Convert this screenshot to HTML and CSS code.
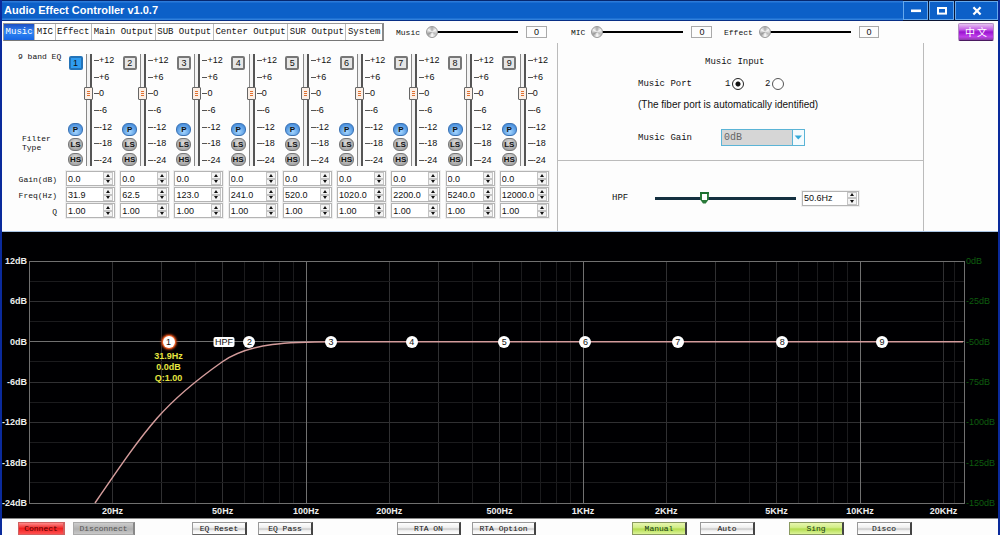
FILE: index.html
```html
<!DOCTYPE html>
<html lang="en">
<head>
<meta charset="utf-8">
<title>Audio Effect Controller v1.0.7</title>
<link rel="stylesheet" href="styles.css">
</head>
<body>
<div class="window">
  <header class="titlebar">
    <h1 class="title">Audio Effect Controller v1.0.7</h1>
    <div class="window-buttons">
      <button class="win-btn" aria-label="Minimize"><svg width="12" height="10" viewBox="0 0 12 10"><path d="M1 4.8h10" stroke="#fff" stroke-width="2.6"/></svg></button>
      <button class="win-btn" aria-label="Maximize"><svg width="12" height="10" viewBox="0 0 12 10"><rect x="2" y="2" width="8" height="5.6" fill="none" stroke="#fff" stroke-width="2"/></svg></button>
      <button class="win-btn win-close" aria-label="Close"><svg width="12" height="10" viewBox="0 0 12 10"><path d="M2.4 1.2l7.2 7.4M9.6 1.2L2.4 8.6" stroke="#fff" stroke-width="2.2"/></svg></button>
    </div>
  </header>

  <div class="toolbar">
    <nav class="tabs">
      <button class="tab tab-active">Music</button>
      <button class="tab">MIC</button>
      <button class="tab">Effect</button>
      <button class="tab">Main Output</button>
      <button class="tab">SUB Output</button>
      <button class="tab">Center Output</button>
      <button class="tab">SUR Output</button>
      <button class="tab">System</button>
    </nav>
    <div class="volumes">
      <div class="volume"><label for="vol-music">Music</label><input id="vol-music" class="ball" type="range" min="0" max="100" value="0"><output class="volume-value">0</output></div>
      <div class="volume"><label for="vol-mic">MIC</label><input id="vol-mic" class="ball" type="range" min="0" max="100" value="0"><output class="volume-value">0</output></div>
      <div class="volume"><label for="vol-effect">Effect</label><input id="vol-effect" class="ball" type="range" min="0" max="100" value="0"><output class="volume-value">0</output></div>
    </div>
    <button class="language" lang="zh">中 文</button>
  </div>

  <main class="panels">
    <section class="eq">
      <div class="eq-labels">
        <span class="eq-name">9 band EQ</span>
        <span class="filter-name">Filter<br>Type</span>
        <div class="row-names"><span>Gain(dB)</span><span>Freq(Hz)</span><span>Q</span></div>
      </div>
      <div class="bands" id="bands"></div>
    </section>

    <div class="settings">
      <section class="music-input">
        <h2 class="panel-title">Music Input</h2>
        <div class="field-row">
          <span class="field-name">Music Port</span>
          <label class="port">1<input type="radio" name="port" checked></label>
          <label class="port">2<input type="radio" name="port"></label>
        </div>
        <p class="note">(The fiber port is automatically identified)</p>
        <div class="field-row gain-row">
          <label class="field-name" for="music-gain">Music Gain</label>
          <span class="combo">
            <select id="music-gain" disabled><option>0dB</option></select>
            <svg class="combo-arrow" viewBox="0 0 12 15"><rect width="12" height="15" fill="#f4fbfe"/><path d="M0.5 0v15" stroke="#5bb4d6"/><path d="M2.6 5.4h7.4L6.3 9.6z" fill="#35a9d8"/></svg>
          </span>
        </div>
      </section>
      <section class="hpf">
        <label class="hpf-name" for="hpf">HPF</label>
        <input id="hpf" class="shield" type="range" min="0" max="100" value="34">
        <div class="spin hpf-spin"><input aria-label="HPF frequency" value="50.6Hz"><span class="steps"><button aria-label="Up"></button><button aria-label="Down"></button></span></div>
      </section>
    </div>
  </main>

  <section class="chart">
    <div class="axis-left" id="axis-left"></div>
    <div class="plot" id="plot">
      <svg class="plot-lines" id="plot-lines" viewBox="0 0 935 242" preserveAspectRatio="none"></svg>
    </div>
    <div class="axis-right" id="axis-right"></div>
    <div class="axis-bottom" id="axis-bottom"></div>
  </section>

  <footer class="actions">
    <div class="group"><button class="action narrow red">Connect</button><button class="action wide off">Disconnect</button></div>
    <div class="group group-mid"><button class="action">EQ Reset</button><button class="action">EQ Pass</button></div>
    <div class="group group-mid"><button class="action wide">RTA ON</button><button class="action wide">RTA Option</button></div>
    <div class="group group-last"><button class="action green">Manual</button><button class="action">Auto</button></div>
    <div class="group group-last"><button class="action green">Sing</button><button class="action">Disco</button></div>
  </footer>
</div>
<script src="app.js"></script>
</body>
</html>
```

FILE: styles.css
```css
* { box-sizing: border-box; }
body { margin: 0; font-family: "Liberation Mono", monospace; font-size: 9px; color: #111; background: #fdfdfd; }
button, input, select { font: inherit; color: inherit; margin: 0; padding: 0; }
h1, h2, p { margin: 0; }

.window { min-height: 100vh; display: flex; flex-direction: column; border: solid #0a2a9c; border-width: 0 2px; background: #fdfdfd; overflow: hidden; }

.titlebar { height: 21px; display: flex; justify-content: space-between; background: linear-gradient(#06286f 0 1px, #2b7ad9 1px 2px, #0c60c8 3px 18px, #2f80dc 19px 20px, #082f86 20px); }
.title { padding-left: 2px; font: bold 11px/20px "Liberation Sans", sans-serif; color: #fff; }
.window-buttons { display: flex; gap: 1px; padding: 1px 0; background: #0a1433; }
.win-btn { width: 25px; display: grid; place-items: center; border: 1px solid #66a8ec; background: #0c60c8; }
.win-close { width: 43px; }

.toolbar { display: flex; align-items: center; height: 22px; padding: 1px 4px 1px 1px; }
.tabs { display: flex; width: 381px; height: 18px; border: 1px solid #999; border-right: 2px solid #888; border-bottom: 1px solid #777; background: #fff; }
.tab { flex: auto; border: 0; border-left: 1px solid #bbb; background: none; white-space: nowrap; }
.tab:first-child { border-left: 0; }
.tab-active { background: linear-gradient(#1d4fc4, #2f86f4 50%, #1766e4); color: #fff; }
.volumes { flex: 1; display: grid; grid-template-columns: 175px 153px 155px; padding-left: 12px; font-size: 8px; }
.volume { display: flex; align-items: center; }
.volume label { margin-right: 6px; }
.volume-value { width: 21px; height: 12px; margin-left: 8px; border: 1px solid #aaa; text-align: center; font: 9px/10px "Liberation Sans", sans-serif; }
.language { width: 36px; height: 18px; border: 1px solid #b48fc4; border-bottom-color: #4a1a60; border-radius: 2px; background: linear-gradient(#e6c2f2, #c45ce6 35%, #9a14d0 50%, #c040ea 80%, #8a3aa8); color: #fff; font: 10px/14px "Noto Sans CJK SC", sans-serif; }

input[type="range"] { -webkit-appearance: none; appearance: none; background: none; }
.ball { width: 92px; height: 12px; }
.ball::-webkit-slider-runnable-track { height: 12px; background: linear-gradient(#000, #000) 6px 5px / 100% 2px no-repeat; }
.ball::-webkit-slider-thumb { -webkit-appearance: none; width: 12px; height: 12px; border: 1px solid #999; border-radius: 50%; background: conic-gradient(#aaa, #f4f4f4, #bbb, #fff, #999, #f6f6f6, #aaa); }

.panels { display: flex; height: 189px; border-bottom: 1px solid #a9c4e4; }
.eq { display: flex; width: 556px; border-right: 1px solid #bbb; padding-right: 3px; }
.eq-labels { width: 64px; display: flex; flex-direction: column; padding: 9px 9px 0 16px; font-size: 8px; line-height: 10px; white-space: nowrap; }
.filter-name { margin: 72px 0 0 4px; line-height: 9px; }
.row-names { display: grid; grid-auto-rows: 16px; margin-top: 20px; line-height: 16px; justify-items: end; }
.bands { flex: 1; display: grid; grid-template-columns: repeat(9, 1fr); padding-top: 11px; font-family: "Liberation Sans", sans-serif; }
.band { display: flex; flex-direction: column; gap: 5px; }
.strip { display: flex; height: 112px; padding-left: 1px; }
.strip-buttons { width: 17px; display: flex; flex-direction: column; align-items: center; gap: 2px; padding-top: 2px; }
.band-no { width: 14px; height: 14px; margin-bottom: auto; border: 2px solid #777; border-radius: 2px; background: #e6e6e6; font-size: 9px; line-height: 10px; }
.band-no.on { background: #2f9cf0; border-color: #2373b8; }
.filter { width: 15px; height: 13px; border: 1px solid #777; border-radius: 6px; background: radial-gradient(circle at 50% 35%, #ddd, #a2a2a2 75%); font-weight: bold; font-size: 8px; line-height: 10px; text-align: center; }
.filter.on { border-color: #3a72b4; background: radial-gradient(circle at 50% 70%, #a8d8ff, #4a90dd 75%); }
.fader { writing-mode: vertical-lr; direction: rtl; width: 10px; height: 112px; }
.fader::-webkit-slider-runnable-track { width: 10px; height: 112px; background: linear-gradient(90deg, transparent 2px, #888 2px 3px, #f4f4f4 3px 6px, #555 6px 8px, transparent 8px); }
.fader::-webkit-slider-thumb { -webkit-appearance: none; width: 9px; height: 13px; border: 1px solid #666; border-radius: 1px; background: linear-gradient(#e07030, #e07030) 2px 3px / 3px 1px no-repeat, linear-gradient(#e07030, #e07030) 2px 5px / 3px 1px no-repeat, linear-gradient(#e07030, #e07030) 2px 7px / 3px 1px no-repeat, #fbefe6; }
.scale { display: flex; flex-direction: column; justify-content: space-between; padding: 1px 0 0; line-height: 11px; white-space: nowrap; }
.scale span { display: flex; align-items: center; }
.scale span::before { content: ""; width: 5px; height: 1px; background: #555; }
.spins { display: grid; gap: 1px; }
.spin { display: flex; width: 49px; height: 15px; border: 1px solid #b4b4b4; outline: 1px solid #eee; background: #fff; font: 9px "Liberation Sans", sans-serif; }
.spin input { flex: 1; min-width: 0; width: 0; border: 0; padding-left: 1px; background: none; }
.steps { width: 12px; display: grid; grid-template-rows: 1fr 1fr; padding: 0 1px; }
.steps button { display: grid; place-items: center; border: 1px solid #c4c4c4; background: #f4f4f4; min-height: 0; overflow: hidden; }
.steps button::before { content: ""; border: 2px solid transparent; border-top: 0; border-bottom: 3px solid #111; }
.steps button:last-child::before { border-bottom: 0; border-top: 3px solid #111; }

.settings { width: 366px; border-right: 1px solid #bbb; display: flex; flex-direction: column; }
.music-input { height: 118px; border-bottom: 1px solid #bbb; padding: 13px 0 0 80px; }
.panel-title { font-size: 9px; font-weight: normal; line-height: 12px; padding-left: 67px; }
.field-row { display: flex; align-items: center; height: 14px; margin-top: 9px; }
.field-name { width: 83px; }
.port { display: flex; align-items: center; gap: 2px; width: 40px; padding-left: 4px; }
.port input { -webkit-appearance: none; appearance: none; width: 12px; height: 12px; border: 1px solid #555; border-radius: 50%; background: #fff; }
.port input:checked { border: 1px solid #222; background: radial-gradient(#111 0 2px, #fff 3px); }
.note { margin-top: 8px; font: 10px/12px "Liberation Sans", sans-serif; }
.gain-row { height: 17px; margin-top: 18px; }
.combo { position: relative; width: 84px; height: 17px; }
.combo select { -webkit-appearance: none; appearance: none; width: 100%; height: 17px; border: 1px solid #5bb4d6; border-radius: 0; padding-left: 2px; background: #d6d6d6; color: #666; opacity: 1; font-size: 10px; }
.combo-arrow { position: absolute; top: 1px; right: 1px; width: 12px; height: 15px; pointer-events: none; }
.hpf { flex: 1; display: flex; align-items: center; padding: 4px 0 0 54px; }
.hpf-name { width: 43px; }
.shield { width: 141px; height: 13px; margin-right: 6px; }
.shield::-webkit-slider-runnable-track { height: 13px; background: linear-gradient(#143040, #143040) 0 5px / 100% 3px no-repeat; }
.shield::-webkit-slider-thumb { -webkit-appearance: none; width: 9px; height: 12px; background: linear-gradient(#1d7030, #1d7030) 0 0 / 9px 2px no-repeat, linear-gradient(#fff, #fff) 2px 2px / 5px 6px no-repeat, #2a7a3a; clip-path: polygon(0 0, 100% 0, 100% 65%, 65% 100%, 35% 100%, 0 65%); }
.hpf-spin { width: 57px; }

.chart { flex: 1; display: grid; grid-template-columns: 27px 1fr 34px; grid-template-rows: 1fr 15px; padding-top: 29px; background: #000002; color: #eee; font: bold 9px/10px "Liberation Sans", sans-serif; }
.plot, .axis-left, .axis-right, .axis-bottom { position: relative; }
.axis-bottom { grid-column: 2; }
.plot-lines { position: absolute; width: 100%; height: 100%; overflow: visible; }
.plot-lines path { fill: none; vector-effect: non-scaling-stroke; }
.grid-line { shape-rendering: crispEdges; stroke: #1b1b1d; }
.grid-line.strong { stroke: #303032; }
.grid-line.edge { stroke: #707070; }
.curve { stroke: #d49c9c; stroke-width: 1.5px; }
.tick { position: absolute; white-space: nowrap; }
.axis-left .tick { right: 2px; transform: translateY(-50%); }
.axis-right .tick { left: 2px; transform: translateY(-50%); color: #0e5c0e; font-weight: normal; }
.axis-bottom .tick { top: 3px; transform: translateX(-50%); }
.marker { position: absolute; top: 33.333%; transform: translate(-50%, -50%); width: 12px; height: 12px; border-radius: 50%; background: #fff; color: #111; font-weight: normal; line-height: 12px; text-align: center; }
.marker.selected { box-shadow: 0 0 0 1px #e8622a, 0 0 2px 2px #b03a10; }
.marker.tag { width: 21px; height: 10px; border-radius: 2px; line-height: 11px; }
.readout { position: absolute; top: 33.333%; transform: translateX(-50%); margin-top: 9px; line-height: 11px; text-align: center; color: #e6e640; }

.actions { height: 17px; display: grid; grid-template-columns: 174fr 205fr 235fr 157fr 209fr; padding: 3px 0 0 16px; border-top: 1px solid #888; font-size: 8px; }
.group { display: flex; gap: 11px; }
.group:first-child { gap: 8px; }
.group-last { gap: 13px; }
.action { width: 55px; height: 14px; border: 1px solid #999; border-right: 2px solid #444; border-bottom: 2px solid #666; background: linear-gradient(#fff, #f0f0f0 40%, #c8c8c8 55%, #f2f2f2 70%, #fff); line-height: 10px; }
.wide { width: 64px; }
.narrow { width: 47px; }
.red { border-color: #d06060; background: linear-gradient(#ff8a8a, #f02020 50%, #ff5050); color: #500; }
.off { width: 62px; border-color: #aaa; border-right-color: #888; background: linear-gradient(#ccc, #b0b0b0 55%, #c8c8c8); color: #555; }
.green { background: linear-gradient(#e8f6b0, #d2ee88 40%, #b4dc50 55%, #dcf49a); border-color: #8a9a60; border-right-color: #444; color: #163c16; }
```

FILE: app.js
```js
const bands = [31.9, 62.5, 123, 241, 520, 1020, 2200, 5240, 12000];
const steps = '<span class="steps"><button aria-label="Up"></button><button aria-label="Down"></button></span>';
const spin = (name, value) => `<div class="spin"><input aria-label="${name}" value="${value}">${steps}</div>`;

document.getElementById('bands').innerHTML = bands.map((freq, i) => `
  <div class="band">
    <div class="strip">
      <div class="strip-buttons">
        <button class="band-no${i ? '' : ' on'}">${i + 1}</button>
        <button class="filter on">P</button><button class="filter">LS</button><button class="filter">HS</button>
      </div>
      <input class="fader" type="range" min="-24" max="12" value="0" aria-label="Band ${i + 1} gain">
      <div class="scale">${['+12', '+6', '0', '-6', '-12', '-18', '-24'].map(t => `<span>${t}</span>`).join('')}</div>
    </div>
    <div class="spins">${spin('Gain', '0.0')}${spin('Frequency', freq.toFixed(1))}${spin('Q', '1.00')}</div>
  </div>`).join('');

// Logarithmic frequency axis, 10 Hz at the left edge.
const W = 935, H = 242, DECADE = 277;
const x = f => Math.log10(f / 10) * DECADE;
const pct = f => `${(x(f) / W * 100).toFixed(2)}%`;
const line = (d, cls) => `<path class="grid-line ${cls}" d="${d}"/>`;

let lines = '';
for (let decade = 10; decade <= 10000; decade *= 10) {
  for (let n = 2; n <= 9; n++) {
    if (decade * n <= 20000) lines += line(`M${x(decade * n)} 0V${H}`, n === 2 || n === 3 || n === 5 ? 'strong' : '');
  }
}
lines += line(`M${x(22000)} 0V${H}`, '');
for (let i = 1; i < 12; i++) lines += line(`M0 ${H * i / 12}H${W}`, i % 2 ? '' : 'strong');
lines += line(`M0 ${H / 3}H${W}`, 'edge');
[10, 100, 1000, 10000].forEach(f => { lines += line(`M${x(f)} 0V${H}`, 'edge'); });
lines += line(`M0 0H${W}V${H}H0`, 'edge');

// High-pass response: steep slope, knee, then flat at 0 dB.
const curve = '<path class="curve" d="M66 242C120 163 135 142 193 101C221 81.5 262 80.7 305 80.7H934"/>';
document.getElementById('plot-lines').innerHTML = lines + curve;

let overlay = `<div class="marker tag" style="left:${pct(50.6)}">HPF</div>`;
bands.forEach((f, i) => { overlay += `<div class="marker${i ? '' : ' selected'}" style="left:${pct(f)}">${i + 1}</div>`; });
overlay += `<div class="readout" style="left:${pct(31.9)}">31.9Hz<br>0.0dB<br>Q:1.00</div>`;
document.getElementById('plot').insertAdjacentHTML('beforeend', overlay);

const vertical = (id, labels) => {
  document.getElementById(id).innerHTML = labels.map((t, i) => `<span class="tick" style="top:${(i / 6 * 100).toFixed(2)}%">${t}dB</span>`).join('');
};
vertical('axis-left', [12, 6, 0, -6, -12, -18, -24]);
vertical('axis-right', [0, -25, -50, -75, -100, -125, -150]);
document.getElementById('axis-bottom').innerHTML = [20, 50, 100, 200, 500, 1000, 2000, 5000, 10000, 20000]
  .map(f => `<span class="tick" style="left:${pct(f)}">${f < 1000 ? f + 'Hz' : f / 1000 + 'KHz'}</span>`).join('');
```
